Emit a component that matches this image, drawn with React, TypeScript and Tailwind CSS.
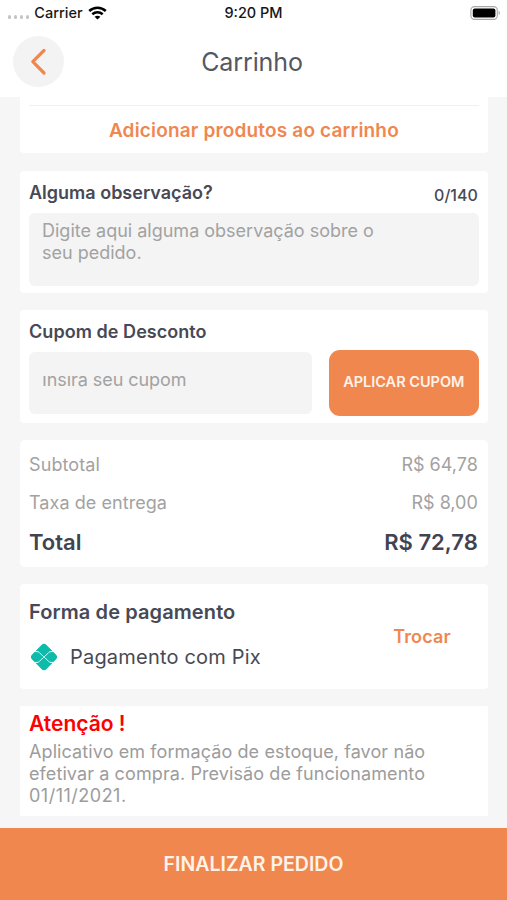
import type { ReactNode } from 'react';

function Card({ className, children }: { className: string; children: ReactNode }) {
  return <section className={`ml-5 mr-[18.6px] shrink-0 bg-white pl-[9px] pr-[9.6px] ${className}`}>{children}</section>;
}

function StatusBar() {
  return (
    <div className="grid h-[26px] grid-cols-3 items-center text-[14.5px] font-medium leading-[26px] text-[#161616]">
      <div className="flex items-center pl-2">
        <div className="mt-[8px] flex gap-[2.6px]">
          {[0, 1, 2, 3].map((dot) => (
            <span key={dot} className="size-[3.4px] rounded-full bg-[#c4c4c4]" />
          ))}
        </div>
        <span className="ml-[5px]">Carrier</span>
        <svg className="ml-[5px] h-[14px] w-[19px]" viewBox="0 0 19 14" fill="none" stroke="#000" strokeWidth="2.5">
          <path d="M1.2 5C6 .6 13 .6 17.8 5" />
          <path d="M4.3 8.3C7.3 5.6 11.7 5.6 14.7 8.3" />
          <path d="M9.5 13.6L6.6 10.8C8.3 9.4 10.7 9.4 12.4 10.8Z" fill="#000" stroke="none" />
        </svg>
      </div>
      <span className="text-center">9:20 PM</span>
      <svg className="ml-auto mr-[6px] h-[14px] w-[31px]" viewBox="0 0 31 14">
        <rect x=".9" y=".6" width="26.4" height="12.8" rx="3.6" fill="#fff" stroke="#a8a8a8" strokeWidth="1.1" />
        <rect x="2.8" y="2.4" width="22.6" height="9.2" rx="2" />
        <path d="M28.7 5v4c1.3-.4 1.5-3.6 0-4z" fill="#a0a0a0" />
      </svg>
    </div>
  );
}

function PixIcon() {
  return (
    <svg className="size-7" viewBox="0 0 28 28">
      <rect x="3.8" y="3.8" width="20.4" height="20.4" rx="3.6" fill="#0cbbaa" transform="rotate(45 14 14)" />
      <g fill="none" stroke="#fff" strokeWidth=".9">
        <path d="M5 8.6h2c1 0 1.700.3 2.400 1l3.500 3.500c.6.6 1.600.6 2.200 0l3.500-3.500c.7-.7 1.400-1 2.400-1h2" />
        <path d="M5 19.400h2c1 0 1.700-.3 2.400-1l3.500-3.500c.6-.6 1.600-.6 2.200 0l3.500 3.500c.7.7 1.400 1 2.400 1h2" />
      </g>
    </svg>
  );
}

export default function App() {
  return (
    <div className="flex h-[900px] w-[507px] flex-col overflow-hidden bg-[#f6f6f6] font-['Inter',sans-serif] text-[#474955]">
      <header className="h-[97px] shrink-0 bg-white">
        <StatusBar />
        <div className="grid h-[71px] grid-cols-[64px_1fr_64px] items-center">
          <button aria-label="Voltar" className="ml-[13px] flex size-[51px] items-center justify-center rounded-full bg-[#f3f3f3]">
            <svg className="size-7" viewBox="0 0 28 28" fill="none" stroke="#f0874d" strokeWidth="3.2" strokeLinecap="round" strokeLinejoin="round">
              <path d="M19 2.5L7.8 13.7L19 25" />
            </svg>
          </button>
          <h1 className="pr-[3px] text-center text-[25px] leading-[30px] tracking-[-0.1px] text-[#555761]">Carrinho</h1>
        </div>
      </header>

      <main className="flex flex-1 flex-col overflow-hidden">
        <Card className="h-[56px] rounded-b-[4px]">
          <div className="mt-2 h-px bg-[#f0f0f0]" />
          <button className="block h-[50px] w-full text-[19px] font-semibold tracking-[0.17px] text-[#ef8751]">Adicionar produtos ao carrinho</button>
        </Card>

        <Card className="mt-[18px] h-[122px] rounded-[4px]">
          <div className="flex h-[42px] justify-between">
            <h2 className="pt-[10px] text-[18px] font-semibold leading-6">Alguma observação?</h2>
            <span className="pr-px pt-[12px] text-[16px] font-medium leading-6">0/140</span>
          </div>
          <div className="h-[73px] rounded-[6px] bg-[#f4f4f4] pl-[13px] pt-[7px] text-[18px] leading-[22px] text-[#a2a2a2]">
            Digite aqui alguma observação sobre o<br />seu pedido.
          </div>
        </Card>

        <Card className="mt-[17px] h-[113px] rounded-[4px]">
          <h2 className="h-[40px] pt-[10px] text-[18px] font-semibold leading-6 tracking-[0.05px]">Cupom de Desconto</h2>
          <div className="flex justify-between">
            <div className="mt-[2px] h-[62px] w-[283px] rounded-[6px] bg-[#f4f4f4] pl-[13px] pt-[24px]">
              <div className="h-[18px] overflow-hidden text-[18px] leading-6 tracking-[-0.06px] text-[#a2a2a2]">
                <span className="-mt-[8px] block">Insira seu cupom</span>
              </div>
            </div>
            <button className="h-[65.5px] w-[150px] rounded-[11px] bg-[#f0874f] pb-[1px] text-[14.5px] font-semibold text-[#fff3e9]">APLICAR CUPOM</button>
          </div>
        </Card>

        <Card className="mt-[17px] h-[127px] rounded-[5px] pt-[13px]">
          <div className="flex h-[38px] justify-between pr-px text-[18px] leading-6 text-[#a2a2a2]"><span className="tracking-[0.1px]">Subtotal</span><span>R$ 64,78</span></div>
          <div className="flex h-[37px] justify-between pr-px text-[18px] leading-6 text-[#a2a2a2]"><span className="tracking-[0.06px]">Taxa de entrega</span><span>R$ 8,00</span></div>
          <div className="flex justify-between pr-px text-[22px] font-semibold leading-[28px] text-[#414351]"><span>Total</span><span>R$ 72,78</span></div>
        </Card>

        <Card className="mt-[17px] flex h-[105px] justify-between rounded-[4px]">
          <div>
            <h2 className="pt-[16px] text-[20px] font-semibold leading-6 tracking-[0.1px]">Forma de pagamento</h2>
            <div className="mt-[19px] flex items-center gap-[12px] pl-px">
              <PixIcon />
              <span className="text-[20px] leading-7 tracking-[0.2px]">Pagamento com Pix</span>
            </div>
          </div>
          <button className="mr-[28px] text-[18px] font-semibold tracking-[0.15px] text-[#ef8751]">Trocar</button>
        </Card>

        <Card className="mt-[17px] h-[110px] rounded-[2px] pt-[5px]">
          <h2 className="text-[21px] font-semibold leading-[26px] text-[#fd0000]">Atenção !</h2>
          <p className="mt-[4px] text-[18px] leading-[22px] tracking-[0.1px] text-[#9c9c9c]">
            Aplicativo em formação de estoque, favor não<br />efetivar a compra. Previsão de funcionamento<br /><span className="tracking-[0.5px]">01/11/2021.</span>
          </p>
        </Card>
      </main>

      <button className="h-[72px] shrink-0 bg-[#f0874f] pt-[2px] text-[19.5px] font-semibold text-[#fff3e9]">FINALIZAR PEDIDO</button>
    </div>
  );
}
